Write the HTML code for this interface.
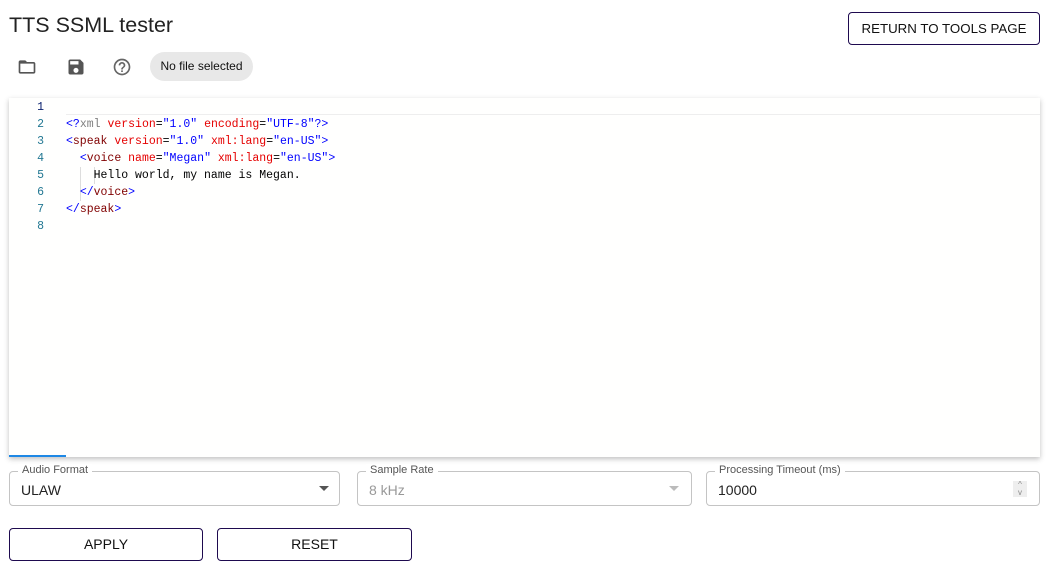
<!DOCTYPE html>
<html><head><style>
body{margin:0;width:1055px;height:571px;background:#fff;font-family:"Liberation Sans",sans-serif;position:relative;overflow:hidden}
.a{position:absolute}
h1{position:absolute;left:9px;top:13px;margin:0;font-weight:400;font-size:21.5px;color:#222}
.btn{position:absolute;border:1px solid #1e0a4f;border-radius:4px;background:#fff;font-size:14px;color:#111;text-align:center;box-sizing:border-box}
.ed{left:9px;top:98px;width:1031px;height:359px;background:#fffffe;box-shadow:0 2px 5px rgba(0,0,0,.25)}
.ln{position:absolute;left:0;width:35px;text-align:right;font-family:"Liberation Mono",monospace;font-size:11.5px;color:#237893;line-height:17px}
.code{position:absolute;left:57px;top:1px;font-family:"Liberation Mono",monospace;font-size:11.5px;line-height:17px;white-space:pre;color:#000}
.t{color:#800000}.b{color:#00f}.r{color:#e50000}.g{color:#808080}
.f{position:absolute;top:471px;height:35px;border:1px solid #c4c4c4;border-radius:4px;box-sizing:border-box}
.f .l{position:absolute;top:-8px;left:8px;background:#fff;padding:0 4px;font-size:11px;color:#555}
.f .v{position:absolute;left:11px;top:10px;font-size:14px;color:#222}
</style></head><body>
<h1>TTS SSML tester</h1>
<div class="btn" style="left:848px;top:12px;width:192px;height:33px;line-height:31px;font-size:13.3px">RETURN TO TOOLS PAGE</div>
<svg class="a" style="left:16px;top:57px" width="22" height="20" viewBox="0 0 24 24"><path d="M20 6h-8l-2-2H4c-1.1 0-2 .9-2 2v12c0 1.1.9 2 2 2h16c1.1 0 2-.9 2-2V8c0-1.1-.9-2-2-2zm0 12H4V8h16v10z" fill="#555"/></svg>
<svg class="a" style="left:66px;top:57px" width="20" height="20" viewBox="0 0 24 24"><path d="M17 3H5c-1.11 0-2 .9-2 2v14c0 1.1.89 2 2 2h14c1.1 0 2-.9 2-2V7l-4-4zm-5 16c-1.66 0-3-1.34-3-3s1.34-3 3-3 3 1.34 3 3-1.34 3-3 3zm3-10H5V5h10v4z" fill="#555"/></svg>
<svg class="a" style="left:112px;top:57px" width="20" height="20" viewBox="0 0 24 24"><path d="M11 18h2v-2h-2v2zm1-16C6.48 2 2 6.48 2 12s4.48 10 10 10 10-4.48 10-10S17.52 2 12 2zm0 18c-4.41 0-8-3.59-8-8s3.59-8 8-8 8 3.590 8 8-3.59 8-8 8zm0-14c-2.21 0-4 1.79-4 4h2c0-1.1.9-2 2-2s2 .9 2 2c0 2-3 1.75-3 5h2c0-2.25 3-2.5 3-5 0-2.21-1.79-4-4-4z" fill="#666"/></svg>
<div class="a" style="left:150px;top:52px;width:103px;height:29px;border-radius:15px;background:#e8e8e8;font-size:12px;line-height:29px;text-align:center;color:#111">No file selected</div>
<div class="a ed">
<div class="a" style="left:57px;top:0;right:0;height:16px;border-bottom:1px solid #eee"></div>
<div class="ln" style="top:1px">1<br>2<br>3<br>4<br>5<br>6<br>7<br>8</div>
<div class="a" style="left:0;top:1px;width:35px;text-align:right;font-family:'Liberation Mono',monospace;font-size:11.5px;line-height:17px;color:#0b216f;background:#fffffe">1</div>
<div class="a" style="left:71px;top:69px;width:1px;height:34px;background:#ddd"></div>
<div class="a" style="left:85px;top:69px;width:1px;height:17px;background:#ddd"></div>
<div class="code">
<span class="b">&lt;?</span><span class="g">xml</span> <span class="r">version</span>=<span class="b">"1.0"</span> <span class="r">encoding</span>=<span class="b">"UTF-8"</span><span class="b">?&gt;</span>
<span class="b">&lt;</span><span class="t">speak</span> <span class="r">version</span>=<span class="b">"1.0"</span> <span class="r">xml:lang</span>=<span class="b">"en-US"</span><span class="b">&gt;</span>
  <span class="b">&lt;</span><span class="t">voice</span> <span class="r">name</span>=<span class="b">"Megan"</span> <span class="r">xml:lang</span>=<span class="b">"en-US"</span><span class="b">&gt;</span>
    Hello world, my name is Megan.
  <span class="b">&lt;/</span><span class="t">voice</span><span class="b">&gt;</span>
<span class="b">&lt;/</span><span class="t">speak</span><span class="b">&gt;</span>
</div>
<div class="a" style="left:0;bottom:0;width:57px;height:2px;background:#1e88e5"></div>
</div>
<div class="f" style="left:9px;width:331px"><span class="l">Audio Format</span><span class="v">ULAW</span><span class="a" style="right:10px;top:14px;border:5px solid transparent;border-top:5px solid #555;border-bottom:0"></span></div>
<div class="f" style="left:357px;width:335px"><span class="l">Sample Rate</span><span class="v" style="color:#999">8 kHz</span><span class="a" style="right:12px;top:14px;border:5px solid transparent;border-top:5px solid #bbb;border-bottom:0"></span></div>
<div class="f" style="left:706px;width:334px"><span class="l">Processing Timeout (ms)</span><span class="v">10000</span><span class="a" style="right:12px;top:9px;width:14px;height:16px;background:#eee;font-size:8px;color:#888;text-align:center;line-height:8px">^<br>v</span></div>
<div class="btn" style="left:9px;top:528px;width:194px;height:33px;line-height:31px">APPLY</div>
<div class="btn" style="left:217px;top:528px;width:195px;height:33px;line-height:31px">RESET</div>
</body></html>
